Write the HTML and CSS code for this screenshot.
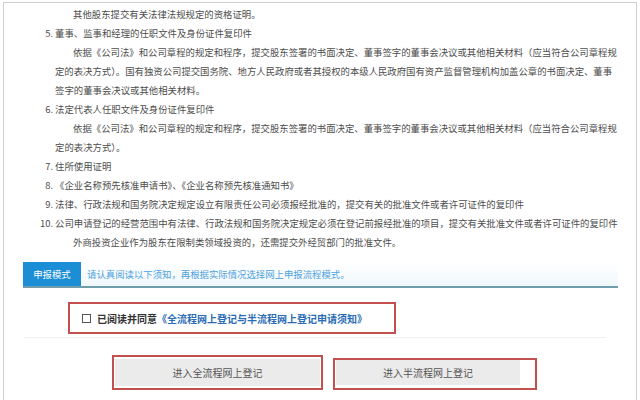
FILE: index.html
```html
<!DOCTYPE html>
<html lang="zh-CN">
<head>
<meta charset="utf-8">
<link rel="stylesheet" href="styles.css">
</head>
<body>
<div class="frame">
  <div class="doc">
    <div class="line ind">其他股东提交有关法律法规规定的资格证明。</div>
    <div class="item"><span class="num">5.</span><span class="txt">董事、监事和经理的任职文件及身份证件复印件</span></div>
    <div class="line txtcol ind full">依据《公司法》和公司章程的规定和程序，提交股东签署的书面决定、董事签字的董事会决议或其他相关材料（应当符合公司章程规</div>
    <div class="line txtcol full tight">定的表决方式）。国有独资公司提交国务院、地方人民政府或者其授权的本级人民政府国有资产监督管理机构加盖公章的书面决定、董事</div>
    <div class="line txtcol">签字的董事会决议或其他相关材料。</div>
    <div class="item"><span class="num">6.</span><span class="txt">法定代表人任职文件及身份证件复印件</span></div>
    <div class="line txtcol ind full">依据《公司法》和公司章程的规定和程序，提交股东签署的书面决定、董事签字的董事会决议或其他相关材料（应当符合公司章程规</div>
    <div class="line txtcol">定的表决方式）。</div>
    <div class="item"><span class="num">7.</span><span class="txt">住所使用证明</span></div>
    <div class="item"><span class="num">8.</span><span class="txt">《企业名称预先核准申请书》、《企业名称预先核准通知书》</span></div>
    <div class="item"><span class="num">9.</span><span class="txt">法律、行政法规和国务院决定规定设立有限责任公司必须报经批准的，提交有关的批准文件或者许可证件的复印件</span></div>
    <div class="item"><span class="num">10.</span><span class="txt full">公司申请登记的经营范围中有法律、行政法规和国务院决定规定必须在登记前报经批准的项目，提交有关批准文件或者许可证件的复印件</span></div>
    <div class="line txtcol ind">外商投资企业作为股东在限制类领域投资的，还需提交外经贸部门的批准文件。</div>
  </div>

  <div class="tabbar">
    <div class="tab">申报模式</div>
    <div class="hint">请认真阅读以下须知，再根据实际情况选择网上申报流程模式。</div>
  </div>

  <div class="agree-wrap">
    <div class="mark agree">
      <span class="box"></span>
      <span class="agree-text">已阅读并同意</span><span class="agree-link">《全流程网上登记与半流程网上登记申请须知》</span>
    </div>
  </div>
  <div class="sep"></div>

  <div class="btnrow">
    <div class="mark mark-left"><div class="btn">进入全流程网上登记</div></div>
    <div class="mark mark-right"><div class="btn">进入半流程网上登记</div></div>
  </div>
</div>
</body>
</html>
```
FILE: styles.css
```css
html, body {
  margin: 0;
  padding: 0;
  background: #ffffff;
}
body {
  width: 640px;
  height: 400px;
  overflow: hidden;
  font-family: "Noto Sans CJK SC", "Microsoft YaHei", sans-serif;
  color: #4d4d4d;
}
.frame {
  margin: 2px 3px 0 3px;
  height: 398px;
  box-sizing: border-box;
  border: 1px solid #cfcfcf;
  border-bottom: none;
}
.doc {
  padding: 2px 24px 0 29px;
  font-size: 9.4px;
  line-height: 19px;
}
.line, .item {
  white-space: nowrap;
  height: 19px;
}
.line {
  padding-left: 22px;
}
.line.ind {
  padding-left: 40px;
}
.item {
  display: flex;
}
.num {
  width: 20px;
  text-align: right;
  margin-right: 2px;
  flex: none;
}
.txt {
  flex: 1;
}
.full {
  text-align: justify;
  text-align-last: justify;
}
.tight {
  letter-spacing: -0.1px;
}

.tabbar {
  margin: 10px 18px 0 19px;
  display: flex;
  align-items: stretch;
  height: 24px;
  border-bottom: 2px solid #6f9dab;
  background: linear-gradient(to bottom, #ffffff, #f1f8fc);
}
.tab {
  width: 58px;
  background: #1b8ed6;
  color: #ffffff;
  font-size: 9.4px;
  display: flex;
  align-items: center;
  justify-content: center;
}
.hint {
  padding-left: 6px;
  color: #4da2de;
  font-size: 9.4px;
  display: flex;
  align-items: center;
}

.agree-wrap {
  margin: 14px 0 0 64px;
}
.mark {
  border: 2.5px solid #c1504e;
  box-sizing: border-box;
}
.agree {
  width: 328px;
  height: 32px;
  display: flex;
  align-items: center;
  padding-left: 12px;
  font-size: 10px;
  font-weight: bold;
}
.box {
  width: 7px;
  height: 7px;
  border: 1px solid #555;
  margin-right: 6px;
  flex: none;
}
.agree-text {
  color: #333333;
}
.agree-link {
  color: #2b6db5;
}
.sep {
  margin: 3px 30px 0 20px;
  height: 1px;
  background: #f0f0f0;
}

.btnrow {
  display: flex;
  align-items: flex-end;
  margin: 17px 0 0 108px;
  gap: 10px;
}
.mark-left {
  width: 211px;
  height: 35px;
  padding: 2px 1px;
}
.mark-right {
  width: 204px;
  height: 32px;
  padding: 0 15px 3px 1px;
}
.btn {
  height: 100%;
  background: #ebebeb;
  color: #555555;
  font-size: 10px;
  display: flex;
  align-items: center;
  justify-content: center;
}
```
